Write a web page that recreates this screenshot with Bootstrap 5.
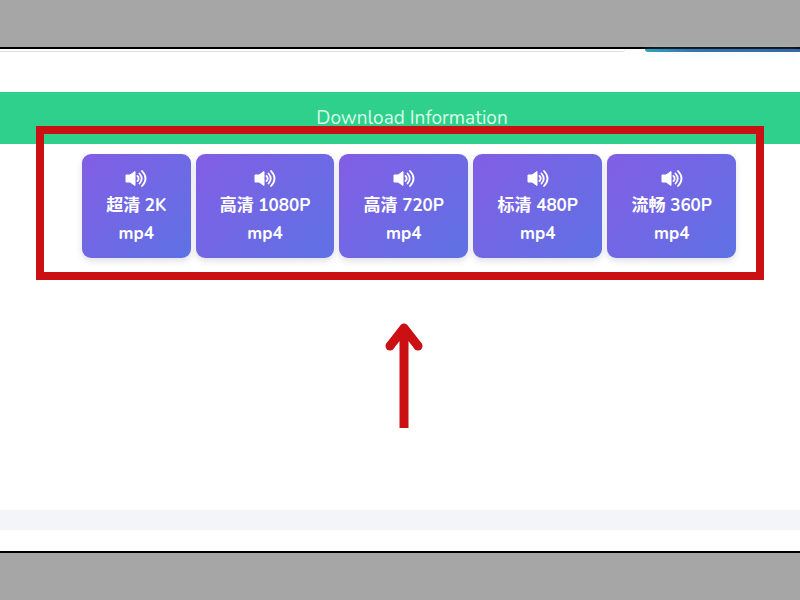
<!DOCTYPE html>
<html lang="en">
<head>
<meta charset="utf-8">
<meta name="viewport" content="width=device-width, initial-scale=1">
<title>Download Information</title>
<link href="https://cdn.jsdelivr.net/npm/bootstrap@5.3.0/dist/css/bootstrap.min.css" rel="stylesheet">
<style>
  body { background: #a6a6a6; font-family: "Open Sans", "Noto Sans CJK SC", sans-serif; }
  .edge-top { height: 47px; }
  .edge-bottom { height: 47px; }
  .sheet { border-top: 2px solid #000; border-bottom: 2px solid #000; }
  .search-strip { height: 43px; }
  .search-field { height: 3px; border-bottom: 1px solid #dcdfe0; border-bottom-right-radius: 4px; margin-right: 20px; }
  .search-action { width: 155px; height: 3px; background: linear-gradient(90deg, #2fa3c0, #3077b8 30%, #3468ab); border-bottom-left-radius: 6px; box-shadow: 0 4px 10px #e6f6fc; }
  .banner { height: 52px; background: #2fd08c; color: #d9fbea; font-family: "Nunito", "Open Sans", sans-serif; font-size: 19px; line-height: 52px; padding-left: 24px; }
  .downloads { padding: 10px 0 22px 18px; }
  .choices { gap: 5px; }
  .quality { height: 104px; min-width: 109px; padding: 5px 24px 0; border: 0; border-radius: 9px; color: #fff; background: linear-gradient(135deg, #825ee4, #5e72e4); box-shadow: 0 3px 6px rgba(50, 50, 93, .15); font-family: "Nunito", "Open Sans", "Noto Sans CJK SC", sans-serif; font-size: 17px; font-weight: 700; line-height: 28px; }
  .quality:not(:first-child) { min-width: 129px; }
  .quality:hover { color: #fff; }
  .quality svg { width: 22px; height: 20px; margin: 0 auto 3px; }
  .highlight { top: -18px; right: 36px; bottom: 0; left: 36px; border: 8px solid #cb1013; }
  .pointer { width: 38px; height: 107px; }
  .pointer-row { padding: 42px 0 0 8px; }
  .divider { height: 20px; background: #f4f5f8; margin-bottom: 21px; }
</style>
</head>
<body class="d-flex flex-column min-vh-100">
  <svg class="d-none" aria-hidden="true">
    <symbol id="sound" viewBox="0 0 22 20">
      <path d="M1 6h4l5-3.500v14L5 13H1z" fill="#fff" stroke="#fff" stroke-linejoin="round"/>
      <path d="M12.500 7q2.500 2.500 0 5M14.500 4.500q4.500 5 0 10M17 2q7 7.500 0 15" fill="none" stroke="#fff" stroke-width="1.800" stroke-linecap="round"/>
    </symbol>
  </svg>
  <div class="edge-top"></div>
  <main class="sheet bg-white flex-grow-1 d-flex flex-column">
    <div class="search-strip d-flex">
      <div class="search-field flex-grow-1"></div>
      <div class="search-action"></div>
    </div>
    <h1 class="banner text-center fw-normal m-0">Download Information</h1>
    <section class="downloads position-relative" aria-label="Download options">
      <div class="choices d-flex justify-content-center">
        <button type="button" class="quality btn d-flex flex-column align-items-center justify-content-center"><svg aria-hidden="true"><use href="#sound"/></svg><span>超清 2K</span><span>mp4</span></button>
        <button type="button" class="quality btn d-flex flex-column align-items-center justify-content-center"><svg aria-hidden="true"><use href="#sound"/></svg><span>高清 1080P</span><span>mp4</span></button>
        <button type="button" class="quality btn d-flex flex-column align-items-center justify-content-center"><svg aria-hidden="true"><use href="#sound"/></svg><span>高清 720P</span><span>mp4</span></button>
        <button type="button" class="quality btn d-flex flex-column align-items-center justify-content-center"><svg aria-hidden="true"><use href="#sound"/></svg><span>标清 480P</span><span>mp4</span></button>
        <button type="button" class="quality btn d-flex flex-column align-items-center justify-content-center"><svg aria-hidden="true"><use href="#sound"/></svg><span>流畅 360P</span><span>mp4</span></button>
      </div>
      <div class="highlight position-absolute pe-none"></div>
    </section>
    <div class="pointer-row text-center">
      <svg class="pointer" viewBox="0 0 38 107" aria-hidden="true">
        <path d="M19 106V8M5 24 19 6l14 18" fill="none" stroke="#cb1013" stroke-width="9" stroke-linejoin="round"/>
        <circle cx="5" cy="24" r="4.500" fill="#cb1013"/><circle cx="33" cy="24" r="4.500" fill="#cb1013"/>
      </svg>
    </div>
    <div class="divider mt-auto"></div>
  </main>
  <div class="edge-bottom"></div>
<script src="https://cdn.jsdelivr.net/npm/bootstrap@5.3.0/dist/js/bootstrap.bundle.min.js"></script>
</body>
</html>
